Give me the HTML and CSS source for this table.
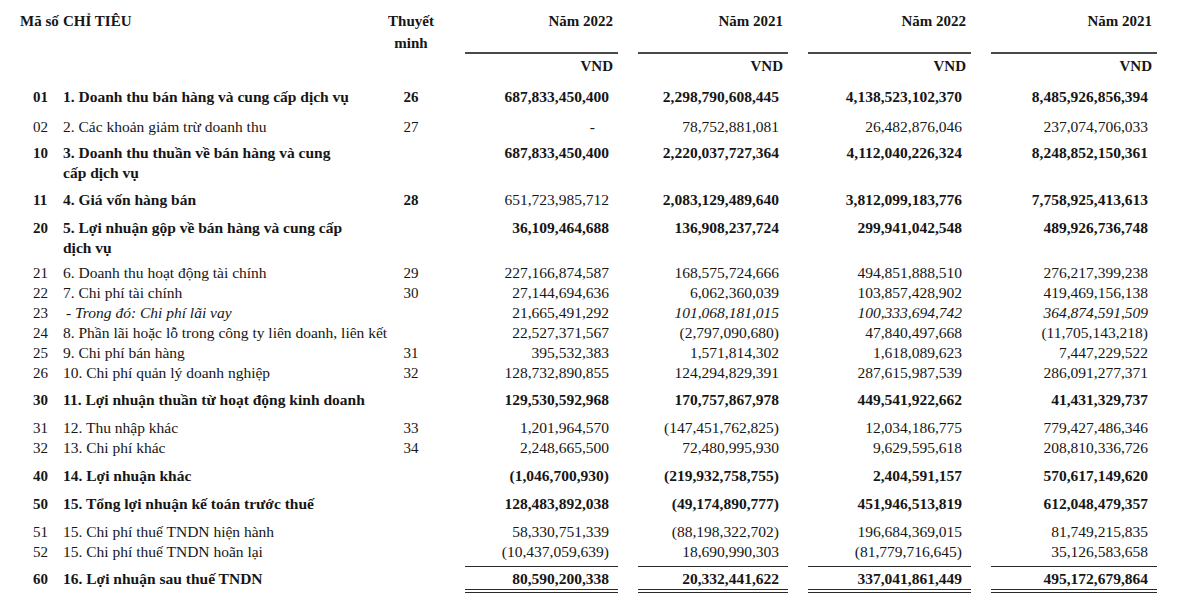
FILE: index.html
```html
<!DOCTYPE html>
<html lang="vi">
<head>
<meta charset="utf-8">
<title>Báo cáo kết quả hoạt động kinh doanh</title>
<link rel="stylesheet" href="styles.css">
</head>
<body>
<div class="sheet">
  <div class="row head">
    <span class="code">Mã số</span>
    <span class="label">CHỈ TIÊU</span>
    <span class="note">Thuyết<br>minh</span>
    <span class="v">Năm 2022</span>
    <span class="v">Năm 2021</span>
    <span class="v">Năm 2022</span>
    <span class="v">Năm 2021</span>
  </div>
  <div class="row unit">
    <span class="code"></span><span class="label"></span><span class="note"></span>
    <span class="v">VND</span><span class="v">VND</span><span class="v">VND</span><span class="v">VND</span>
  </div>

  <div class="row b mt11">
    <span class="code">01</span><span class="label">1. Doanh thu bán hàng và cung cấp dịch vụ</span><span class="note">26</span>
    <span class="v">687,833,450,400</span><span class="v">2,298,790,608,445</span><span class="v">4,138,523,102,370</span><span class="v">8,485,926,856,394</span>
  </div>
  <div class="row mt10">
    <span class="code">02</span><span class="label">2. Các khoản giảm trừ doanh thu</span><span class="note">27</span>
    <span class="v"><span class="dash">-</span></span><span class="v">78,752,881,081</span><span class="v">26,482,876,046</span><span class="v">237,074,706,033</span>
  </div>
  <div class="row b mt6">
    <span class="code">10</span><span class="label">3. Doanh thu thuần về bán hàng và cung<br>cấp dịch vụ</span><span class="note"></span>
    <span class="v">687,833,450,400</span><span class="v">2,220,037,727,364</span><span class="v">4,112,040,226,324</span><span class="v">8,248,852,150,361</span>
  </div>
  <div class="row b mt7">
    <span class="code">11</span><span class="label">4. Giá vốn hàng bán</span><span class="note">28</span>
    <span class="v n">651,723,985,712</span><span class="v">2,083,129,489,640</span><span class="v">3,812,099,183,776</span><span class="v">7,758,925,413,613</span>
  </div>
  <div class="row b mt8">
    <span class="code">20</span><span class="label">5. Lợi nhuận gộp về bán hàng và cung cấp<br>dịch vụ</span><span class="note"></span>
    <span class="v">36,109,464,688</span><span class="v">136,908,237,724</span><span class="v">299,941,042,548</span><span class="v">489,926,736,748</span>
  </div>
  <div class="row mt5">
    <span class="code">21</span><span class="label">6. Doanh thu hoạt động tài chính</span><span class="note">29</span>
    <span class="v">227,166,874,587</span><span class="v">168,575,724,666</span><span class="v">494,851,888,510</span><span class="v">276,217,399,238</span>
  </div>
  <div class="row">
    <span class="code">22</span><span class="label">7. Chi phí tài chính</span><span class="note">30</span>
    <span class="v">27,144,694,636</span><span class="v">6,062,360,039</span><span class="v">103,857,428,902</span><span class="v">419,469,156,138</span>
  </div>
  <div class="row">
    <span class="code">23</span><span class="label i indent">- Trong đó: Chi phí lãi vay</span><span class="note"></span>
    <span class="v">21,665,491,292</span><span class="v i">101,068,181,015</span><span class="v i">100,333,694,742</span><span class="v i">364,874,591,509</span>
  </div>
  <div class="row">
    <span class="code">24</span><span class="label wide">8. Phần lãi hoặc lỗ trong công ty liên doanh, liên kết</span>
    <span class="v">22,527,371,567</span><span class="v">(2,797,090,680)</span><span class="v">47,840,497,668</span><span class="v">(11,705,143,218)</span>
  </div>
  <div class="row">
    <span class="code">25</span><span class="label">9. Chi phí bán hàng</span><span class="note">31</span>
    <span class="v">395,532,383</span><span class="v">1,571,814,302</span><span class="v">1,618,089,623</span><span class="v">7,447,229,522</span>
  </div>
  <div class="row">
    <span class="code">26</span><span class="label">10. Chi phí quản lý doanh nghiệp</span><span class="note">32</span>
    <span class="v">128,732,890,855</span><span class="v">124,294,829,391</span><span class="v">287,615,987,539</span><span class="v">286,091,277,371</span>
  </div>
  <div class="row b mt7">
    <span class="code">30</span><span class="label wide">11. Lợi nhuận thuần từ hoạt động kinh doanh</span>
    <span class="v">129,530,592,968</span><span class="v">170,757,867,978</span><span class="v">449,541,922,662</span><span class="v">41,431,329,737</span>
  </div>
  <div class="row mt8">
    <span class="code">31</span><span class="label">12. Thu nhập khác</span><span class="note">33</span>
    <span class="v">1,201,964,570</span><span class="v">(147,451,762,825)</span><span class="v">12,034,186,775</span><span class="v">779,427,486,346</span>
  </div>
  <div class="row">
    <span class="code">32</span><span class="label">13. Chi phí khác</span><span class="note">34</span>
    <span class="v">2,248,665,500</span><span class="v">72,480,995,930</span><span class="v">9,629,595,618</span><span class="v">208,810,336,726</span>
  </div>
  <div class="row b mt8">
    <span class="code">40</span><span class="label">14. Lợi nhuận khác</span><span class="note"></span>
    <span class="v">(1,046,700,930)</span><span class="v">(219,932,758,755)</span><span class="v">2,404,591,157</span><span class="v">570,617,149,620</span>
  </div>
  <div class="row b mt8">
    <span class="code">50</span><span class="label">15. Tổng lợi nhuận kế toán trước thuế</span><span class="note"></span>
    <span class="v">128,483,892,038</span><span class="v">(49,174,890,777)</span><span class="v">451,946,513,819</span><span class="v">612,048,479,357</span>
  </div>
  <div class="row mt8">
    <span class="code">51</span><span class="label">15. Chi phí thuế TNDN hiện hành</span><span class="note"></span>
    <span class="v">58,330,751,339</span><span class="v">(88,198,322,702)</span><span class="v">196,684,369,015</span><span class="v">81,749,215,835</span>
  </div>
  <div class="row">
    <span class="code">52</span><span class="label">15. Chi phí thuế TNDN hoãn lại</span><span class="note"></span>
    <span class="v">(10,437,059,639)</span><span class="v">18,690,990,303</span><span class="v">(81,779,716,645)</span><span class="v">35,126,583,658</span>
  </div>
  <div class="row b total">
    <span class="code">60</span><span class="label">16. Lợi nhuận sau thuế TNDN</span><span class="note"></span>
    <span class="v">80,590,200,338</span><span class="v">20,332,441,622</span><span class="v">337,041,861,449</span><span class="v">495,172,679,864</span>
  </div>
</div>
</body>
</html>
```

FILE: styles.css
```css
html, body {
  margin: 0;
  padding: 0;
  background: #ffffff;
}

body {
  font-family: "Liberation Serif", "Times New Roman", serif;
  color: #161616;
}

.sheet {
  display: flex;
  flex-direction: column;
  padding: 10px 0 0 20px;
}

.row {
  display: grid;
  grid-template-columns: 43px 302px 80px 173px 170px 183px 186px;
  line-height: 20px;
  font-size: 15.5px;
}

.row > span {
  white-space: nowrap;
}

.code {
  padding-left: 13px;
  font-size: 15px;
}

.label.indent {
  padding-left: 3px;
}

.label.wide {
  grid-column: 2 / 4;
}

.note {
  text-align: center;
  padding-left: 12px;
  font-size: 15px;
}

.v {
  margin-left: 20px;
  text-align: right;
  padding-right: 9px;
  font-size: 15.5px;
}

.b {
  font-weight: bold;
}

.b .v.n {
  font-weight: normal;
}

.i {
  font-style: italic;
}

.dash {
  padding-right: 14px;
}

/* header */
.head {
  font-weight: bold;
  line-height: 22px;
  font-size: 15px;
}

.head .code {
  padding-left: 0;
}

.head .label {
  font-size: 15px;
}

.head .v {
  font-size: 15px;
  padding-right: 5px;
  border-bottom: 2px solid #4a4a4a;
}

.unit {
  font-weight: bold;
  margin-top: 2px;
}

.unit .v {
  font-size: 15px;
  padding-right: 5px;
}

.mt5 { margin-top: 5px; }
.mt6 { margin-top: 6px; }
.mt7 { margin-top: 7px; }
.mt8 { margin-top: 8px; }
.mt10 { margin-top: 10px; }
.mt11 { margin-top: 11px; }

/* totals */
.total {
  margin-top: 4px;
}

.total > span {
  padding-top: 3px;
}

.total .v {
  padding-top: 2px;
  border-top: 1px solid #2a2a2a;
  border-bottom: 4px double #2a2a2a;
}
```
